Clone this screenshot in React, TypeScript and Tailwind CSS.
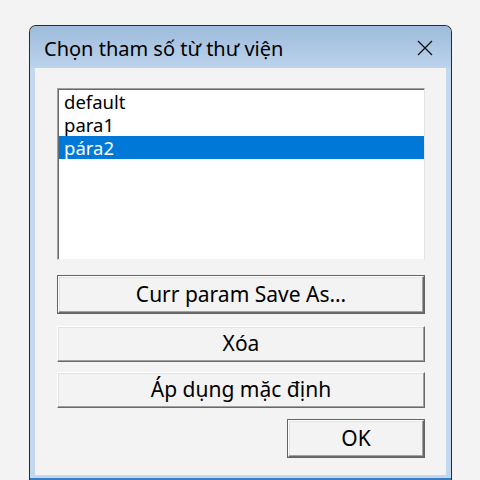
import { useState } from "react";

const ITEMS = ["default", "para1", "pára2"];

// Classic raised Win32 push button
function PushButton({
  label,
  isDefault = false,
  className = "",
}: {
  label: string;
  isDefault?: boolean;
  className?: string;
}) {
  const face = (
    <div className="flex h-full w-full items-center justify-center border-t border-l border-b border-r border-t-white border-l-white border-b-[#696969] border-r-[#696969] bg-[#f3f3f3] shadow-[inset_-1px_-1px_0_#a0a0a0,inset_1px_1px_0_#e3e3e3] text-[21px] text-black">
      {label}
    </div>
  );

  if (!isDefault) return <div className={className}>{face}</div>;

  return <div className={`border border-[#646464] ${className}`}>{face}</div>;
}

export default function App() {
  const [selected, setSelected] = useState(2);

  return (
    <div
      className="h-[480px] w-[480px] overflow-hidden bg-[#f3f3f3] pl-[29px] pt-[25px]"
      style={{ fontFamily: '"Noto Sans", "Open Sans", sans-serif' }}
    >
      {/* ── Window frame ── */}
      <div className="flex h-[455px] w-[423px] flex-col rounded-t-[7px] border-x border-t border-[#2a2a2a] bg-[#c3d8ee]">
        {/* Title bar */}
        <div className="flex h-[42px] items-center justify-between rounded-t-[6px] bg-gradient-to-b from-[#9dbbdb] to-[#bcd3ec] pl-[14px] pr-[18px]">
          <span className="pt-[3px] text-[20px] leading-none text-black">Chọn tham số từ thư viện</span>
          <svg width="16" height="16" viewBox="0 0 16 16" className="mt-[1px]">
            <path d="M1 1 L15 15 M15 1 L1 15" stroke="#111" strokeWidth="1.3" fill="none" />
          </svg>
        </div>

        {/* Client area */}
        <div className="mx-[5px] flex h-[407px] flex-col bg-[#f3f3f3] pl-[22px] pr-[21px] pt-[20px]">
          {/* List box */}
          <div className="h-[172px] w-full border-t border-l border-b border-r border-t-[#a0a0a0] border-l-[#a0a0a0] border-b-[#f0f0f0] border-r-[#e3e3e3] bg-white pt-[1px] pl-[1px] shadow-[inset_1px_1px_0_#696969]">
            {ITEMS.map((item, i) => (
              <div
                key={item}
                onClick={() => setSelected(i)}
                className={`h-[23px] pl-[5px] text-[18.5px] leading-[23px] ${
                  selected === i ? "bg-[#0078d7] text-white" : "text-black"
                }`}
              >
                {item}
              </div>
            ))}
          </div>

          <PushButton label="Curr param Save As…" isDefault className="mt-[15px] h-[39px]" />
          <PushButton label="Xóa" className="mt-[12px] h-[36px]" />
          <PushButton label="Áp dụng mặc định" className="mt-[10px] h-[36px]" />

          <div className="mt-[11px] flex justify-end">
            <PushButton label="OK" isDefault className="h-[39px] w-[138px]" />
          </div>
        </div>

        {/* Bottom frame */}
        <div className="h-[3px]" />
        <div className="h-[2px] bg-[#3a7bc8]" />
      </div>
    </div>
  );
}
